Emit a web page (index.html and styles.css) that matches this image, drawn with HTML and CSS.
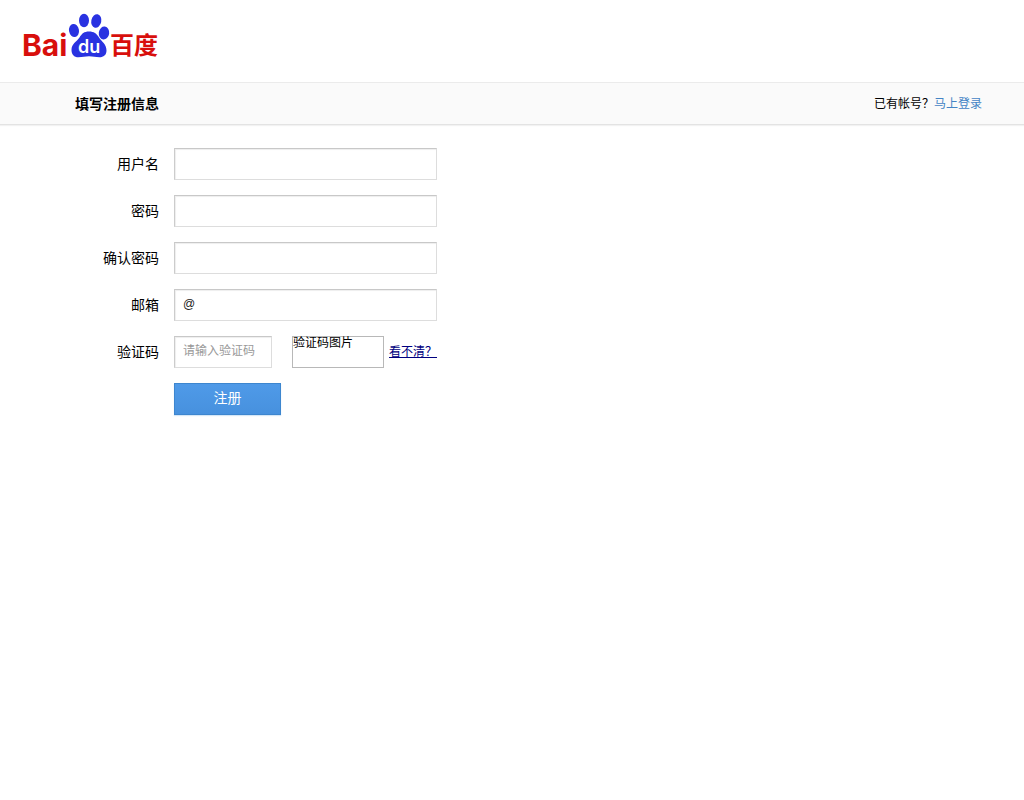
FILE: index.html
```html
<!DOCTYPE html>
<html lang="zh-CN">
<head>
<meta charset="utf-8">
<title>注册百度帐号</title>
<link rel="stylesheet" href="styles.css">
</head>
<body>
<header class="header">
  <svg class="logo" width="136" height="48" viewBox="0 0 136 48" role="img" aria-label="Baidu 百度">
    <text class="logo-latin" x="-2" y="44">Bai</text>
    <g fill="#2932e1">
      <ellipse cx="50" cy="18.500" rx="5" ry="6.500" transform="rotate(-10 50 18.500)"/>
      <ellipse cx="60" cy="8.500" rx="5" ry="6.800"/>
      <ellipse cx="72.300" cy="9" rx="5" ry="6.800" transform="rotate(12 72.300 9)"/>
      <ellipse cx="80" cy="21" rx="5.200" ry="6.500" transform="rotate(8 80 21)"/>
      <path d="M65 19.500C70 19.500 72.500 21.500 75 25.500C77.500 29.500 82.500 32 82.500 38.500C82.500 43 79.500 45.300 75.500 45.300C71.500 45.300 69 44.300 65 44.300C61 44.300 58.500 45.300 54.500 45.300C50 45.300 47.500 42.500 47.500 38C47.500 31.500 52.500 30 55.500 25.500C58 21.500 60 19.500 65 19.500Z"/>
    </g>
    <text class="logo-du" x="54" y="41">du</text>
    <text class="logo-cjk" x="86" y="42">百度</text>
  </svg>
</header>
<div class="title-bar">
  <h1 class="title">填写注册信息</h1>
  <p class="login">已有帐号？<a class="login-link" href="#">马上登录</a></p>
</div>
<main>
  <form class="form">
    <label class="label" for="username">用户名</label>
    <input class="field" id="username" type="text">
    <label class="label" for="password">密码</label>
    <input class="field" id="password" type="password">
    <label class="label" for="confirm">确认密码</label>
    <input class="field" id="confirm" type="password">
    <label class="label" for="email">邮箱</label>
    <input class="field" id="email" type="text" value="@">
    <label class="label" for="captcha">验证码</label>
    <div class="captcha-row">
      <input class="field captcha-field" id="captcha" type="text" placeholder="请输入验证码">
      <div class="captcha-picture">验证码图片</div>
      <a class="refresh" href="#">看不清？</a>
    </div>
    <button class="submit" type="submit">注册</button>
  </form>
</main>
</body>
</html>
```
FILE: styles.css
```css
* {
  box-sizing: border-box;
}

body {
  margin: 0;
  background: #fff;
  color: #000;
  font: 12px/16px "Liberation Sans", "Noto Sans CJK SC", sans-serif;
}

.header {
  padding: 12px 24px 22px;
}

.logo {
  display: block;
  overflow: visible;
}

.logo-latin {
  fill: #d80f0c;
  font: bold 30px Inter, "Liberation Sans", sans-serif;
}

.logo-du {
  fill: #fff;
  font: 600 18px Inter, "Liberation Sans", sans-serif;
}

.logo-cjk {
  fill: #d80f0c;
  font: bold 24px "Noto Sans CJK SC", sans-serif;
}

.title-bar {
  display: flex;
  justify-content: space-between;
  align-items: center;
  height: 43px;
  padding: 0 42px 0 75px;
  border-top: 1px solid #ebebeb;
  border-bottom: 1px solid #e3e3e3;
  background: #fafafa;
  box-shadow: 0 1px 1px #f2f2f2;
}

.title {
  margin: 0;
  font-size: 14px;
  line-height: 20px;
}

.login {
  margin: 0;
}

.login-link {
  color: #4484c5;
  text-decoration: none;
}

.form {
  display: grid;
  grid-template-columns: 84px minmax(0, 263px);
  grid-auto-rows: 32px;
  gap: 15px;
  padding: 23px 24px 24px 75px;
}

.label {
  font-size: 14px;
  line-height: 32px;
  text-align: right;
}

.field {
  width: 100%;
  height: 32px;
  padding: 0 8px 2px;
  border: 1px solid #ddd;
  border-top-color: #c8c8c8;
  border-left-color: #ccc;
  border-radius: 0;
  background: #fff;
  box-shadow: inset 1px 1px 1px #eee;
  color: #222;
  font: inherit;
}

.field::placeholder {
  color: #999;
  opacity: 1;
}

.captcha-row {
  display: flex;
  align-items: center;
}

.captcha-field {
  width: 98px;
}

.captcha-picture {
  flex: none;
  width: 92px;
  height: 32px;
  margin: 0 5px 0 20px;
  border: 1px solid #b8b8b8;
  line-height: 12px;
}

.refresh {
  color: #000080;
  line-height: 28px;
  white-space: nowrap;
}

.submit {
  grid-column: 2;
  width: 107px;
  padding: 0 0 2px;
  border: 1px solid #3d86cf;
  border-radius: 0;
  background: linear-gradient(#4f9ae8, #4791de);
  box-shadow: 0 1px 1px #d5e7f7;
  color: #fff;
  font: 14px/20px "Liberation Sans", "Noto Sans CJK SC", sans-serif;
}
```
